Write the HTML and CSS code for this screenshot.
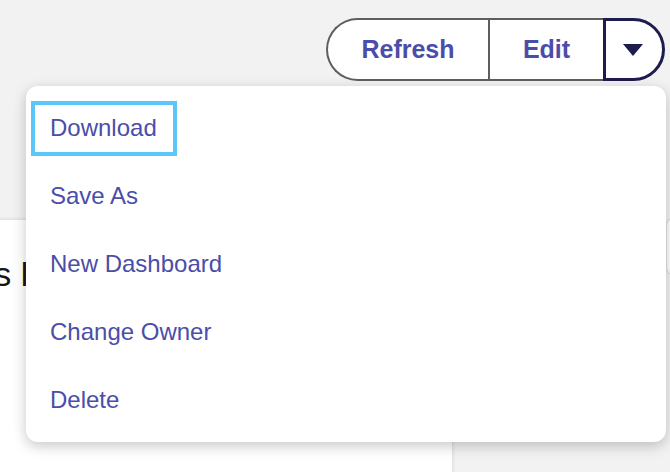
FILE: index.html
```html
<!DOCTYPE html>
<html lang="en">
  <head>
    <meta charset="UTF-8" />
    <meta name="viewport" content="width=device-width, initial-scale=1.0" />
    <title>Dashboard actions</title>
    <link rel="stylesheet" href="styles.css">
  </head>
  <body>
    <div class="page">
      <header class="toolbar">
        <div class="btn-group" role="group" aria-label="Dashboard actions">
          <button class="seg seg-refresh">Refresh</button>
          <button class="seg seg-edit">Edit</button>
          <button class="seg seg-toggle" aria-haspopup="menu" aria-expanded="true" aria-label="More actions">
            <svg width="20" height="12" viewBox="0 0 20 12" aria-hidden="true">
              <polygon points="0,0 20,0 10,12" />
            </svg>
          </button>
        </div>
      </header>

      <section class="content">
        <div class="card">
          <h2 class="card-title">Dashboards list</h2>
        </div>
        <div class="side-tab"></div>
      </section>

      <ul class="menu" role="menu">
        <li class="menu-item"><a href="#" class="menu-link is-focused" role="menuitem">Download</a></li>
        <li class="menu-item"><a href="#" class="menu-link" role="menuitem">Save As</a></li>
        <li class="menu-item"><a href="#" class="menu-link" role="menuitem">New Dashboard</a></li>
        <li class="menu-item"><a href="#" class="menu-link" role="menuitem">Change Owner</a></li>
        <li class="menu-item"><a href="#" class="menu-link" role="menuitem">Delete</a></li>
      </ul>
    </div>
  </body>
</html>
```

FILE: styles.css
```css
* {
  box-sizing: border-box;
}

body {
  margin: 0;
  background: #f2f2f2;
  font-family: "Liberation Sans", Arial, sans-serif;
}

.page {
  position: relative;
  width: 670px;
  height: 472px;
  overflow: hidden;
}

/* top bar with the split button */
.toolbar {
  display: flex;
  justify-content: flex-end;
  padding: 18px 5px 0 0;
}

.btn-group {
  display: flex;
}

.seg {
  display: flex;
  align-items: center;
  justify-content: center;
  height: 63px;
  padding: 0;
  background: #fff;
  border: 2px solid #5e5e5e;
  border-right: 0;
  color: #4a4ea8;
  font: 700 25px "Liberation Sans", Arial, sans-serif;
  cursor: pointer;
}

.seg-refresh {
  width: 162px;
  border-radius: 32px 0 0 32px;
}

.seg-edit {
  width: 115px;
}

.seg-toggle {
  width: 62px;
  border: 3px solid #1d1c4d;
  border-radius: 0 32px 32px 0;
  padding-right: 2px;
}

.seg-toggle svg {
  fill: #1d1c4d;
}

/* page body */
.content {
  display: flex;
  align-items: flex-start;
  margin-top: 139px;
}

.card {
  flex-shrink: 0;
  width: 652px;
  height: 260px;
  margin-left: -200px;
  padding: 34px 0 0 28px;
  background: #fff;
  box-shadow: 0 0 4px rgba(0, 0, 0, 0.16);
}

.card-title {
  margin: 0;
  color: #161616;
  font-size: 34px;
  font-weight: 400;
  line-height: 40px;
  white-space: nowrap;
}

.side-tab {
  flex-shrink: 0;
  width: 30px;
  height: 57px;
  margin-left: 215px;
  margin-top: -2px;
  background: #fff;
  border-radius: 8px;
  box-shadow: 0 0 3px rgba(0, 0, 0, 0.2);
}

/* dropdown */
.menu {
  position: absolute;
  top: 86px;
  left: 26px;
  width: 640px;
  margin: 0;
  padding: 8px 0;
  list-style: none;
  background: #fff;
  border-radius: 12px;
  box-shadow: 0 4px 14px rgba(0, 0, 0, 0.22);
}

.menu-item {
  display: flex;
  align-items: center;
  height: 68px;
  padding-left: 5px;
}

.menu-link {
  display: inline-flex;
  align-items: center;
  height: 55px;
  padding: 0 16px 0 15px;
  border: 4px solid transparent;
  color: #4a4ea8;
  font-size: 24px;
  text-decoration: none;
}

.menu-link.is-focused {
  border-color: #5bc6f8;
}
```
